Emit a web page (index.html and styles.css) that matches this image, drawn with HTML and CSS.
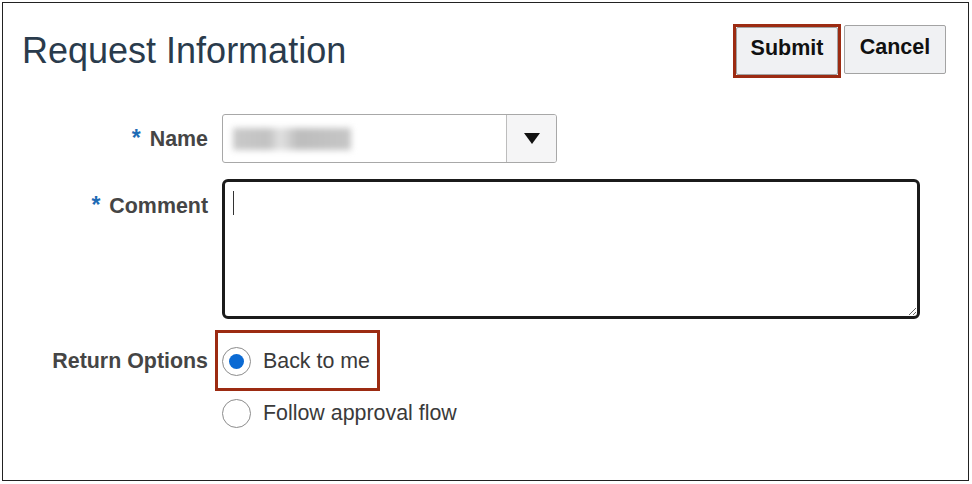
FILE: index.html
```html
<!DOCTYPE html>
<html lang="en">
<head>
    <meta charset="UTF-8">
    <meta name="viewport" content="width=device-width, initial-scale=1.0">
    <title>Request Information</title>
    <link rel="stylesheet" href="styles.css">
</head>
<body>
    <div class="dialog">
        <div class="dialog-header">
            <h1>Request Information</h1>
            <div class="actions">
                <div class="callout">
                    <button class="btn">Submit</button>
                </div>
                <button class="btn btn-cancel">Cancel</button>
            </div>
        </div>

        <div class="form">
            <div class="row">
                <label class="field-label"><span class="req">*</span>Name</label>
                <div class="combo">
                    <div class="combo-value"><span class="blurred"></span></div>
                    <div class="combo-btn">
                        <svg width="16" height="11" viewBox="0 0 16 11"><path d="M0 0 H16 L8 11 Z" fill="#111"/></svg>
                    </div>
                </div>
            </div>

            <div class="row row-comment">
                <label class="field-label label-top"><span class="req">*</span>Comment</label>
                <div class="comment-wrap">
                    <textarea class="comment"></textarea>
                    <span class="caret"></span>
                </div>
            </div>

            <div class="row row-options">
                <span class="field-label label-options">Return Options</span>
                <div class="options">
                    <label class="option option-marked">
                        <input type="radio" name="ret" checked>
                        Back to me
                    </label>
                    <label class="option">
                        <input type="radio" name="ret">
                        Follow approval flow
                    </label>
                </div>
            </div>
        </div>
    </div>
</body>
</html>
```

FILE: styles.css
```css
* {
    margin: 0;
    padding: 0;
    box-sizing: border-box;
    font-family: 'Liberation Sans', Arial, sans-serif;
}

body {
    background: #fff;
}

.dialog {
    margin: 2px 0 0 2px;
    width: 967px;
    height: 479px;
    border: 1px solid #222;
}

.dialog-header {
    display: flex;
    justify-content: space-between;
    align-items: flex-start;
    padding: 21px 22px 0 19px;
}

.dialog-header h1 {
    margin-top: 6px;
    font-size: 36px;
    line-height: 42px;
    font-weight: normal;
    color: #2a3b4c;
}

.actions {
    display: flex;
    align-items: flex-start;
    gap: 3px;
}

/* annotation box round the Submit button */
.callout {
    border: 3px solid #9c2b12;
}

.btn {
    display: block;
    width: 102px;
    height: 48px;
    padding-bottom: 5px;
    background: #f0f1f3;
    border: 1px solid #a3a3a3;
    border-radius: 2px;
    font-size: 21.5px;
    font-weight: bold;
    color: #111;
    cursor: pointer;
}

.btn-cancel {
    margin-top: 1px;
    height: 49px;
}

.form {
    display: flex;
    flex-direction: column;
    margin-top: 36px;
}

.row {
    display: flex;
    align-items: center;
    gap: 14px;
}

.row-comment {
    align-items: flex-start;
    margin-top: 16px;
}

.row-options {
    align-items: flex-start;
    margin-top: 28px;
}

.field-label {
    width: 205px;
    text-align: right;
    font-size: 21.4px;
    line-height: 25px;
    font-weight: bold;
    color: #454545;
}

.label-top {
    padding-top: 14px;
}

.label-options {
    line-height: 29px;
}

.req {
    color: #1d6bb5;
    font-size: 23px;
    margin-right: 9px;
}

.combo {
    display: flex;
    width: 335px;
    height: 49px;
    border: 1px solid #a8a8a8;
    border-radius: 3px;
    overflow: hidden;
}

.combo-value {
    flex: 1;
    display: flex;
    align-items: center;
    padding-left: 10px;
}

.blurred {
    display: block;
    width: 118px;
    height: 22px;
    background: linear-gradient(to right, #c9c9c9 0, #c2c2c2 30%, #e2e2e2 40%, #bdbdbd 55%, #c6c6c6 100%);
    filter: blur(3px);
}

.combo-btn {
    width: 50px;
    display: flex;
    justify-content: center;
    align-items: center;
    background: #f5f5f6;
    border-left: 1px solid #bdbdbd;
}

.comment-wrap {
    position: relative;
}

.comment {
    display: block;
    width: 698px;
    height: 140px;
    border: 3px solid #1b1b1b;
    border-radius: 6px;
    padding: 8px 10px;
    font-size: 21px;
    outline: none;
}

.caret {
    position: absolute;
    left: 11px;
    top: 12px;
    width: 1px;
    height: 24px;
    background: #333;
}

.options {
    display: flex;
    flex-direction: column;
    align-items: flex-start;
    gap: 23px;
}

.option {
    position: relative;
    display: flex;
    align-items: center;
    gap: 12px;
    font-size: 21.4px;
    line-height: 29px;
    color: #3a3a3a;
}

.option input {
    appearance: none;
    width: 29px;
    height: 29px;
    border: 1px solid #8c8c8c;
    border-radius: 50%;
    background: #fff;
    display: flex;
    justify-content: center;
    align-items: center;
}

.option input:checked::after {
    content: "";
    width: 15px;
    height: 15px;
    border-radius: 50%;
    background: #0b6ad3;
}

/* annotation box round the first option */
.option-marked::after {
    content: "";
    position: absolute;
    top: -17px;
    bottom: -15px;
    left: -7px;
    right: -10px;
    border: 3px solid #9c2b12;
}
```
